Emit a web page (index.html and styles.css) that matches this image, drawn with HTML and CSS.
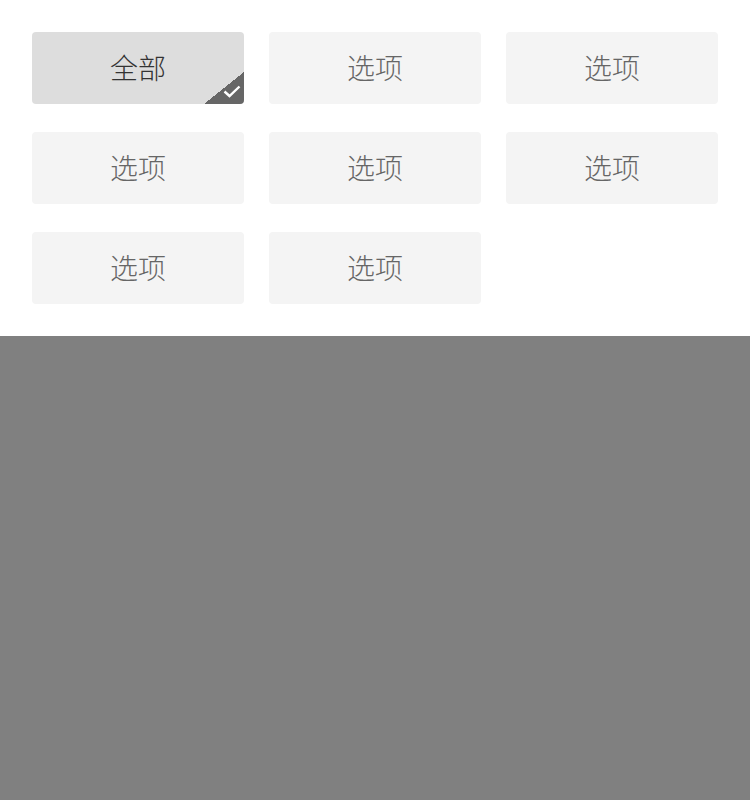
FILE: index.html
```html
<!DOCTYPE html>
<html lang="zh">
<head>
<meta charset="utf-8">
<link rel="stylesheet" href="styles.css">
</head>
<body>
<div class="panel">
  <div class="grid">
    <div class="opt selected"><span class="label">全部</span><span class="corner"><svg class="check" width="18" height="13" viewBox="0 0 18 13"><path d="M1.5 6.5 L6.5 11 L16.5 1.5" fill="none" stroke="#fff" stroke-width="2.4"/></svg></span></div>
    <div class="opt"><span class="label">选项</span></div>
    <div class="opt"><span class="label">选项</span></div>
    <div class="opt"><span class="label">选项</span></div>
    <div class="opt"><span class="label">选项</span></div>
    <div class="opt"><span class="label">选项</span></div>
    <div class="opt"><span class="label">选项</span></div>
    <div class="opt"><span class="label">选项</span></div>
  </div>
</div>
</body>
</html>
```
FILE: styles.css
```css
html, body {
  margin: 0;
  padding: 0;
  height: 100%;
  background: #808080;
  font-family: "Noto Sans CJK SC", "Noto Sans", sans-serif;
}
.panel {
  background: #fff;
  padding: 32px;
  height: 336px;
  box-sizing: border-box;
}
.grid {
  display: grid;
  grid-template-columns: repeat(3, 212px);
  column-gap: 25px;
  row-gap: 28px;
}
.opt {
  position: relative;
  height: 72px;
  border-radius: 4px;
  background: #f4f4f4;
  color: #666;
  font-size: 28px;
  font-weight: 300;
  display: flex;
  align-items: center;
  justify-content: center;
  overflow: hidden;
}
.label {
  line-height: 1;
  margin-bottom: 2px;
}
.opt.selected {
  background: #ddd;
  color: #333;
}
.corner {
  position: absolute;
  right: 0;
  bottom: 0;
  width: 40px;
  height: 32px;
  background: linear-gradient(to bottom right, transparent 50%, #666 50%);
}
.check {
  position: absolute;
  right: 3px;
  bottom: 6px;
}
```
